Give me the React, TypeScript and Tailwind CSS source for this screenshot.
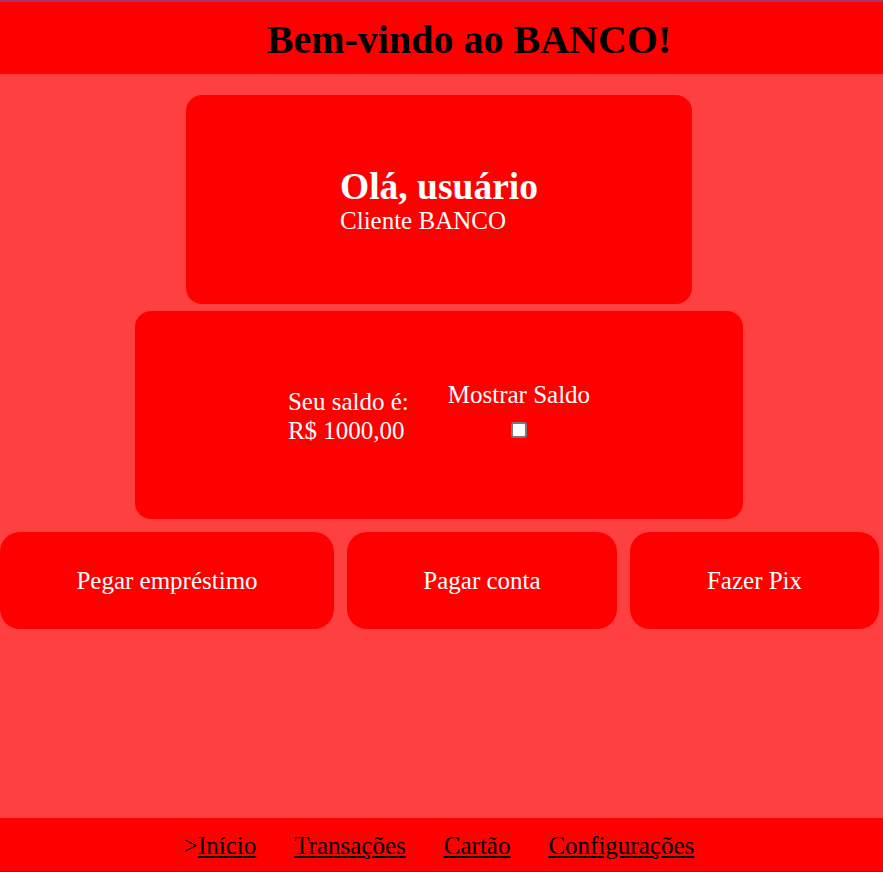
import { useState } from 'react';

const serif = { fontFamily: '"Liberation Serif", "Times New Roman", serif' };

function ActionButton({ label, width }: { label: string; width: string }) {
  return (
    <button className={`${width} h-[97px] shrink-0 rounded-[20px] bg-[#ff0000] text-[25px] text-white`}>
      {label}
    </button>
  );
}

export default function App() {
  const [showBalance, setShowBalance] = useState(false);

  return (
    <div style={serif} className="flex h-[872px] w-[883px] flex-col overflow-hidden bg-[#ff4040]">
      {/* Header */}
      <header className="flex h-[74px] shrink-0 items-center justify-center border-t-2 border-[#a8356f] bg-[#ff0000] pl-[55px] pt-[4px]">
        <h1 className="text-[40px] font-bold leading-none text-black">Bem-vindo ao BANCO!</h1>
      </header>

      <main className="flex w-[878px] flex-1 flex-col items-center pt-[21px]">
        {/* Greeting card */}
        <section className="flex h-[209px] w-[506px] items-center justify-center rounded-[16px] bg-[#ff0000] pt-[2px] text-white">
          <div>
            <h2 className="text-[37.5px] font-bold leading-[40px]">Olá, usuário</h2>
            <p className="text-[25px] leading-[28px]">Cliente BANCO</p>
          </div>
        </section>

        {/* Balance card */}
        <section className="mt-[7px] flex h-[208px] w-[608px] items-start justify-center gap-[39px] rounded-[16px] bg-[#ff0000] pt-[70px] text-[25px] leading-[28.75px] text-white">
          <div className="mt-[7px]">
            <p>Seu saldo é:</p>
            <p>R$ 1000,00</p>
          </div>
          <div className="flex flex-col items-center">
            <span>Mostrar Saldo</span>
            <input
              type="checkbox"
              checked={showBalance}
              onChange={e => setShowBalance(e.target.checked)}
              className="mt-[12px] h-[16px] w-[16px] appearance-none rounded-[3px] border-2 border-[#7a7a7a] bg-white"
            />
          </div>
        </section>

        {/* Actions */}
        <div className="mt-[13px] flex w-full gap-[13px]">
          <ActionButton label="Pegar empréstimo" width="w-[334px]" />
          <ActionButton label="Pagar conta" width="w-[270px]" />
          <ActionButton label="Fazer Pix" width="w-[249px]" />
        </div>
      </main>

      {/* Footer nav */}
      <footer className="flex h-[54px] shrink-0 items-center justify-center gap-[38px] border-b border-[#404040] bg-[#ff0000] pr-[5px] pt-[2px] text-[25px] text-black">
        <span>
          &gt;<a href="#" className="underline">Início</a>
        </span>
        <a href="#" className="underline">Transações</a>
        <a href="#" className="underline">Cartão</a>
        <a href="#" className="underline">Configurações</a>
      </footer>
    </div>
  );
}
